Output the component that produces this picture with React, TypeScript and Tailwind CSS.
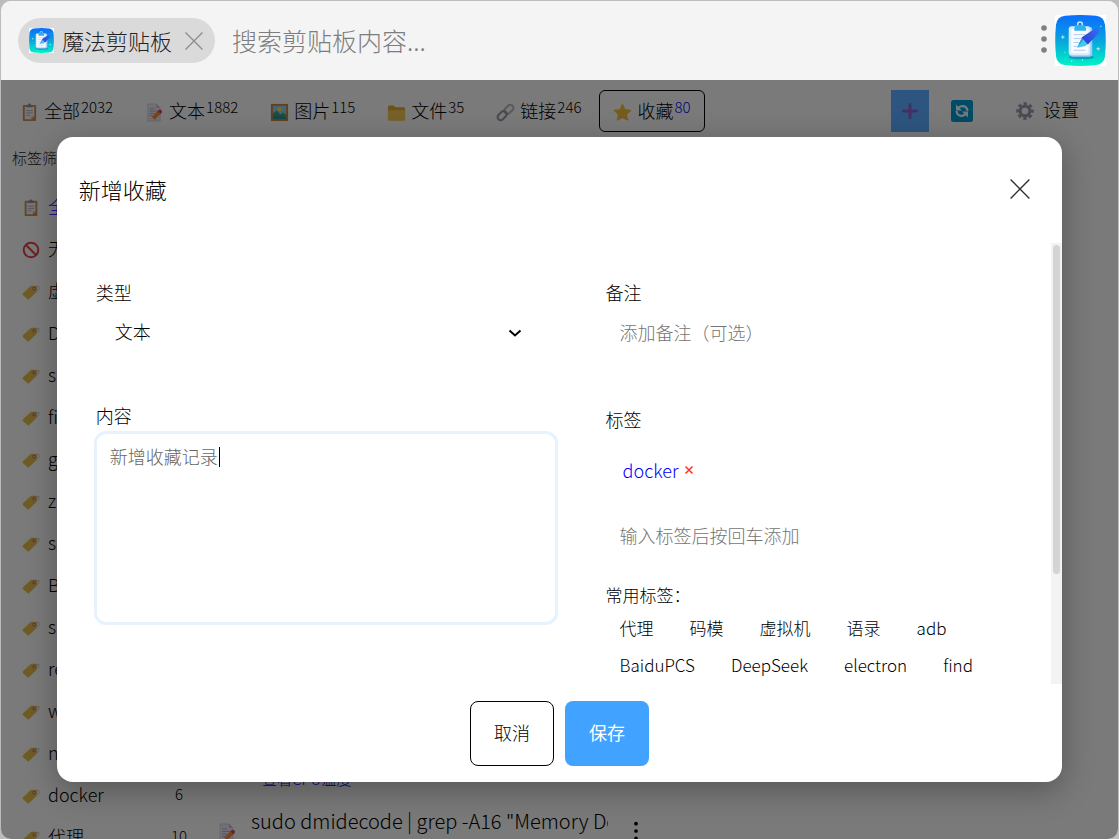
import { type ReactNode } from "react";

type IconProps = { className?: string };

function LogoIcon({ className }: IconProps) {
  return (
    <svg viewBox="0 0 52 52" className={className} aria-hidden="true">
      <defs>
        <linearGradient id="logo-bg" x1="0" y1="0" x2="0" y2="1">
          <stop offset="0" stopColor="#0a6cff" />
          <stop offset="0.5" stopColor="#08a4dc" />
          <stop offset="1" stopColor="#00f2c8" />
        </linearGradient>
        <linearGradient id="logo-pen" x1="1" y1="0" x2="0" y2="1">
          <stop offset="0" stopColor="#3a6cf5" />
          <stop offset="1" stopColor="#2340cf" />
        </linearGradient>
      </defs>
      <rect width="52" height="52" fill="#fff" />
      <path d="M10 .8Q26-.8 42 .8Q50 2 51 10Q52.6 26 51 42Q50 50 42 51Q26 52.8 10 51Q2 50 1 42Q-.6 26 1 10Q2 2 10 .8Z" fill="url(#logo-bg)" />
      <ellipse cx="27" cy="43" rx="13" ry="2.200" fill="#067fa8" opacity=".6" />
      <rect x="15" y="12" width="23" height="30.500" rx="3" fill="#9cc8fa" />
      <rect x="14" y="11.500" width="22" height="29.500" rx="3" fill="#d9eafd" />
      <rect x="16.500" y="14" width="17.500" height="25" rx="1" fill="#f8fbff" />
      <path d="M19 20h12M19 24h9M19 28h7M19 32h4M19 36h12" stroke="#b4cbee" strokeWidth="1" />
      <circle cx="25.500" cy="9.500" r="2.400" fill="none" stroke="#c8e9ff" strokeWidth="1.500" />
      <path d="M20.500 10.500h10l1.500 4.500q0 1-1 1H20.500q-1 0-1-1Z" fill="#2fb2ec" />
      <path d="M22.500 33.500l5-10 6.500 5.500-3 2.500Z" fill="#45c8f0" />
      <path d="M22.500 33.500l5-10 1.500 1.300Z" fill="#1f93dd" />
      <path d="M27 23L40.500 14q2.500-1 4 1.200q1 1.800-.4 3.600L33.500 30Z" fill="url(#logo-pen)" />
      <path d="M8 20l.6 1.900L10.500 22.500l-1.900.6L8 25l-.6-1.900L5.500 22.500l1.900-.6ZM44 32l.6 1.900L46.500 34.500l-1.900.6L44 37l-.6-1.900L41.500 34.500l1.900-.6Z" fill="#b5efff" />
      <path d="M17 46v2M28 45v1.500M46 11.500h1.500M9.500 38h1" stroke="#a0f0ea" strokeWidth="1" />
    </svg>
  );
}

function ClipboardIcon({ className }: IconProps) {
  return (
    <svg viewBox="0 0 18 20" className={className} aria-hidden="true">
      <rect x="2" y="2" width="14" height="17" rx="1" fill="#c98a4b" />
      <path d="M4 4h10v10l-3 3H4Z" fill="#eceaf0" />
      <path d="M14 14l-3 3v-3Z" fill="#b9b6c4" />
      <path d="M5.500 8h7M5.500 10.500h7M5.500 13h4" stroke="#a5a3ae" strokeWidth=".9" />
      <path d="M6 2h1.500a1.500 1.500 0 0 1 3 0H12v2.500H6Z" fill="#8b8994" />
    </svg>
  );
}

function MemoIcon({ className }: IconProps) {
  return (
    <svg viewBox="0 0 18 20" className={className} aria-hidden="true">
      <path d="M2 1h9l4 4v14H2Z" fill="#e4e1ee" stroke="#b9b5c6" strokeWidth=".6" />
      <path d="M11 1v4h4Z" fill="#b9b5c6" />
      <path d="M4 6h5M4 8.500h8M4 11h5M4 13.500h3" stroke="#a6a2b4" strokeWidth=".9" />
      <path d="M5 18.500l1.200-4 3 3Z" fill="#f7d9b0" />
      <path d="M6.200 14.500l6-6 3 3-6 6Z" fill="#f0873c" />
      <path d="M12.200 8.500l1.600-1.500q1.500-.6 2.600.6 1 1.300.3 2.500l-1.500 1.400Z" fill="#d8405a" />
    </svg>
  );
}

function PictureIcon({ className }: IconProps) {
  return (
    <svg viewBox="0 0 20 20" className={className} aria-hidden="true">
      <rect x="1" y="1" width="18" height="18" fill="#c4803e" />
      <rect x="3" y="3" width="14" height="14" fill="#8fc9ea" />
      <circle cx="10" cy="6.500" r="2" fill="#ffd23e" />
      <path d="M3 11l4-3 4 4 3-2 3 3v4H3Z" fill="#3f9d78" />
      <path d="M3 14q5-2 14 1v2H3Z" fill="#2c8a9a" />
    </svg>
  );
}

function FolderIcon({ className }: IconProps) {
  return (
    <svg viewBox="0 0 20 20" className={className} aria-hidden="true">
      <path d="M1 4q0-1.500 1.500-1.500h4.500l2 2h8.500Q19 4.500 19 6v11q0 1.500-1.500 1.500h-15Q1 18.500 1 17Z" fill="#d9a52c" />
      <path d="M1 7.500h18V17q0 1.500-1.500 1.500h-15Q1 18.500 1 17Z" fill="#ecc352" />
    </svg>
  );
}

function LinkIcon({ className }: IconProps) {
  return (
    <svg viewBox="0 0 20 20" fill="none" strokeWidth="2.200" className={className} aria-hidden="true">
      <rect x="8" y="3.500" width="11" height="6.500" rx="3.250" transform="rotate(-45 13.500 6.750)" stroke="#b4b2ba" />
      <rect x="1" y="10" width="11" height="6.500" rx="3.250" transform="rotate(-45 6.500 13.250)" stroke="#94929c" />
    </svg>
  );
}

function StarIcon({ className }: IconProps) {
  return (
    <svg viewBox="0 0 20 20" className={className} aria-hidden="true">
      <path d="M10 1.800l2.500 5.400 5.900.7-4.400 4 1.200 5.900L10 14.900l-5.200 2.900L6 11.900l-4.400-4 5.900-.7Z" fill="#ecb93c" stroke="#ecb93c" strokeWidth="1.600" strokeLinejoin="round" />
    </svg>
  );
}

function ForbiddenIcon({ className }: IconProps) {
  return (
    <svg viewBox="0 0 18 18" fill="none" stroke="#d9414b" strokeWidth="2" className={className} aria-hidden="true">
      <circle cx="9" cy="9" r="7.300" />
      <path d="M4 4l10 10" />
    </svg>
  );
}

function TagIcon({ className }: IconProps) {
  return (
    <svg viewBox="0 0 18 18" className={className} aria-hidden="true">
      <path d="M.8 10.600L8.600 3.200q.6-.5 1.400-.5h4q1 0 1 1v3.800q0 .8-.6 1.400L7 16.200q-.7.6-1.400 0L.8 12q-.6-.7 0-1.400Z" fill="#dfb94a" />
      <circle cx="12" cy="5.600" r="1.300" fill="#d8cfd0" stroke="#cc5a50" strokeWidth="1" />
      <path d="M12.500 5q2.500-2.600 4.300-1.400 1 1.800-1.300 4" fill="none" stroke="#b0aeb6" strokeWidth=".7" />
    </svg>
  );
}

function RefreshIcon({ className }: IconProps) {
  return (
    <svg viewBox="0 0 22 22" className={className} aria-hidden="true">
      <rect width="22" height="22" rx="2.500" fill="#0096cc" />
      <g fill="none" stroke="#eef4fa" strokeWidth="2.200">
        <path d="M16.500 11Q16 6.200 11.500 6.200q-2.400 0-4 1.800" />
        <path d="M5.500 11q.5 4.800 5 4.800 2.400 0 4-1.800" />
      </g>
      <path d="M5 4.500v6h6ZM17 17.500v-6h-6Z" fill="#eef4fa" />
    </svg>
  );
}

function GearIcon({ className }: IconProps) {
  return (
    <svg viewBox="0 0 18 18" fill="none" stroke="#9a94a6" className={className} aria-hidden="true">
      <circle cx="9" cy="9" r="4.900" strokeWidth="3.200" />
      <circle cx="9" cy="9" r="7.300" strokeWidth="3" strokeDasharray="3.200 2.533" strokeDashoffset="1.600" />
    </svg>
  );
}

function CrossIcon({ className }: IconProps) {
  return (
    <svg viewBox="0 0 20 20" fill="none" stroke="currentColor" strokeWidth="1.400" className={className} aria-hidden="true">
      <path d="M.6 .6l18.800 18.800M19.400 .6L.6 19.400" />
    </svg>
  );
}

function DotsIcon({ className }: IconProps) {
  return (
    <svg viewBox="0 0 6 28" fill="currentColor" className={className} aria-hidden="true">
      <circle cx="3" cy="3" r="2.800" />
      <circle cx="3" cy="14" r="2.800" />
      <circle cx="3" cy="25" r="2.800" />
    </svg>
  );
}

const tabs = [
  { label: "全部", count: 2032, icon: ClipboardIcon },
  { label: "文本", count: 1882, icon: MemoIcon },
  { label: "图片", count: 115, icon: PictureIcon },
  { label: "文件", count: 35, icon: FolderIcon },
  { label: "链接", count: 246, icon: LinkIcon },
  { label: "收藏", count: 80, icon: StarIcon, active: true },
];

const filters = [
  { label: "全部", icon: ClipboardIcon, active: true },
  { label: "无标签", icon: ForbiddenIcon },
  { label: "虚拟机", icon: TagIcon },
  { label: "DeepSeek", icon: TagIcon },
  { label: "shell", icon: TagIcon },
  { label: "find", icon: TagIcon },
  { label: "git", icon: TagIcon },
  { label: "zip", icon: TagIcon },
  { label: "sed", icon: TagIcon },
  { label: "BaiduPCS", icon: TagIcon },
  { label: "sudo", icon: TagIcon },
  { label: "redis", icon: TagIcon },
  { label: "web", icon: TagIcon },
  { label: "npm", icon: TagIcon },
  { label: "docker", icon: TagIcon, count: 6 },
  { label: "代理", icon: TagIcon, count: 10 },
];

const commonTags = ["代理", "码模", "虚拟机", "语录", "adb", "BaiduPCS", "DeepSeek", "electron", "find"];

function Header() {
  return (
    <header className="flex h-[79px] shrink-0 items-center bg-[#f4f4f4] pl-[17px] pr-3">
      <div className="flex h-[45px] items-center rounded-full bg-[#dadada] pl-[11px] pr-3">
        <LogoIcon className="size-[25px]" />
        <span className="ml-2 text-[22px] text-[#222]">魔法剪贴板</span>
        <button type="button" aria-label="关闭" className="ml-[13px] text-[#8c8c8c]">
          <CrossIcon className="size-[18px]" />
        </button>
      </div>
      <input
        type="text"
        aria-label="搜索"
        placeholder="搜索剪贴板内容..."
        className="ml-[17px] min-w-0 flex-1 bg-transparent text-[25px] outline-none placeholder:text-[#7d7d7d]"
      />
      <button type="button" aria-label="更多" className="mb-1 mr-2 text-[#808080]">
        <DotsIcon className="h-7 w-[6px]" />
      </button>
      <LogoIcon className="size-[51px]" />
    </header>
  );
}

function Toolbar() {
  return (
    <nav className="flex h-[62px] shrink-0 items-center pl-[5px] pr-[39px] text-lg text-black">
      <div className="flex gap-1">
        {tabs.map(({ label, count, icon: Icon, active }) => (
          <button
            key={label}
            type="button"
            className={`flex h-[42px] items-center rounded-md border px-[13px] ${active ? "border-black" : "border-transparent"}`}
          >
            <Icon className="mt-[2px] size-[19px]" />
            <span className="ml-[5px] pb-[2px]">{label}</span>
            <span className={`ml-px mb-2 text-[15px] ${active ? "text-[#00f]" : ""}`}>{count}</span>
          </button>
        ))}
      </div>
      <button type="button" aria-label="新增收藏" className="ml-auto flex h-[42px] w-[38px] items-center justify-center bg-[#5aabff]">
        <svg viewBox="0 0 16 16" className="size-4" aria-hidden="true">
          <path d="M8 1.500v13M1.500 8h13" stroke="#8a5fc8" strokeWidth="3" strokeLinecap="round" />
        </svg>
      </button>
      <button type="button" aria-label="刷新" className="ml-[22px]">
        <RefreshIcon className="size-[22px]" />
      </button>
      <button type="button" className="ml-[43px] flex items-center gap-[9px]">
        <GearIcon className="size-[18px]" />
        <span className="pb-1">设置</span>
      </button>
    </nav>
  );
}

function Sidebar() {
  return (
    <aside className="w-[200px] shrink-0 overflow-hidden">
      <h2 className="pl-[11px] text-[15px] leading-8 text-[#222]">标签筛选</h2>
      <ul className="pt-[13px] text-lg text-black">
        {filters.map(({ label, icon: Icon, active, count }) => (
          <li key={label} className="flex h-[42px] items-center pl-[21px] pr-3">
            <Icon className="size-[18px] shrink-0" />
            <span className={`ml-2 truncate pb-1 ${active ? "text-[#00f]" : ""}`}>{label}</span>
            {count && <span className="ml-auto w-5 pb-1 text-center text-[15px]">{count}</span>}
          </li>
        ))}
      </ul>
    </aside>
  );
}

function RecordList() {
  return (
    <section className="flex w-[440px] flex-col justify-end overflow-hidden pl-[17px]">
      <p className="pl-11 text-[15px] leading-5 text-[#00f]">查看CPU温度</p>
      <div className="mt-[14px] flex h-9 shrink-0 items-start">
        <MemoIcon className="mt-5 h-5 w-[18px] shrink-0" />
        <span className="ml-[15px] w-[357px] overflow-hidden whitespace-nowrap text-xl leading-9 text-black">
          sudo dmidecode | grep -A16 "Memory Device"
        </span>
        <DotsIcon className="ml-[26px] mt-[18px] h-5 w-1 shrink-0 text-black" />
      </div>
    </section>
  );
}

function FieldLabel({ htmlFor, children }: { htmlFor: string; children: ReactNode }) {
  return (
    <label htmlFor={htmlFor} className="block h-7 text-lg leading-7">
      {children}
    </label>
  );
}

function FavoriteDialog() {
  return (
    <div role="dialog" aria-label="新增收藏" className="flex h-[85%] w-[90%] flex-col overflow-hidden rounded-[16px] bg-white text-black shadow-[0_8px_32px_rgba(0,0,0,0.3)]">
      <div className="flex h-[106px] shrink-0 items-center justify-between pl-[22px] pr-8">
        <h1 className="text-[22px]">新增收藏</h1>
        <button type="button" aria-label="关闭" className="pb-[2px] text-[#333]">
          <CrossIcon className="size-5" />
        </button>
      </div>

      <form className="flex min-h-0 flex-1">
        <div className="grid flex-1 grid-cols-[51fr_49fr] gap-12 overflow-hidden pl-[37px] pt-[35px]">
          <div>
            <div className="pl-[2px]">
              <FieldLabel htmlFor="type">类型</FieldLabel>
            </div>
            <div className="relative">
              <select id="type" className="h-[50px] w-full appearance-none bg-transparent pl-[21px] text-lg outline-none">
                <option>文本</option>
              </select>
              <svg viewBox="0 0 14 14" className="pointer-events-none absolute right-9 top-5 size-[14px]" aria-hidden="true">
                <path d="M1.500 4.500L7 9.500l5.500-5" fill="none" stroke="#000" strokeWidth="2" />
              </svg>
            </div>
            <div className="mt-[45px] pl-[2px]">
              <FieldLabel htmlFor="content">内容</FieldLabel>
            </div>
            <div className="relative mt-[2px]">
              <textarea
                id="content"
                placeholder="新增收藏记录"
                className="block h-[194px] w-full resize-none rounded-xl border-3 border-[#e6f3ff] px-[13px] py-[10px] text-lg leading-6 outline-none placeholder:text-[#666]"
              />
              {/* text caret */}
              <span className="absolute left-[125px] top-4 h-5 w-px bg-black" />
            </div>
          </div>

          <div>
            <FieldLabel htmlFor="note">备注</FieldLabel>
            <input id="note" type="text" placeholder="添加备注（可选）" className="block h-13 w-full pl-[14px] text-lg outline-none placeholder:text-[#757575]" />
            <div className="mt-[47px]">
              <FieldLabel htmlFor="tag">标签</FieldLabel>
            </div>
            <div className="flex h-[74px] items-center gap-[6px] pl-[17px] text-lg">
              <span className="text-[#00f]">docker</span>
              <button type="button" aria-label="删除 docker" className="text-[#f33]">
                <svg viewBox="0 0 10 10" className="size-[10px]" aria-hidden="true">
                  <path d="M1.500 1.500l7 7M8.500 1.500l-7 7" stroke="currentColor" strokeWidth="1.600" />
                </svg>
              </button>
            </div>
            <input id="tag" type="text" placeholder="输入标签后按回车添加" className="mt-[2px] block h-13 w-full pl-[14px] text-lg outline-none placeholder:text-[#757575]" />
            <p className="mt-5 text-[17px] leading-7">常用标签：</p>
            <div className="mt-[2px] flex flex-wrap gap-x-2 gap-y-1">
              {commonTags.map((tag) => (
                <button key={tag} type="button" className="h-[33px] px-[14px] text-[17px]">
                  {tag}
                </button>
              ))}
            </div>
          </div>
        </div>

        {/* scroll bar */}
        <div className="flex w-[11px] shrink-0 justify-center bg-[#f3f3f3] pt-[2px]">
          <div className="h-3/4 w-[7px] rounded-full bg-[#d4d4d4]" />
        </div>
      </form>

      <div className="flex h-[98px] shrink-0 items-start justify-center gap-[11px] pt-[17px] text-lg">
        <button type="button" className="h-[65px] w-[84px] rounded-lg border border-black pb-1">
          取消
        </button>
        <button type="button" className="h-[65px] w-[84px] rounded-lg bg-[#42a2ff] pb-1 font-normal text-white">
          保存
        </button>
      </div>
    </div>
  );
}

export default function App() {
  return (
    <div className="h-screen bg-[#bcbcbc] px-px pt-px font-['Noto_Sans_CJK_SC',sans-serif] font-light">
      <div className="flex h-full flex-col overflow-hidden rounded-[10px] bg-[#f4f4f4]">
        <Header />
        <main className="relative flex min-h-0 flex-1 flex-col">
          <Toolbar />
          <div className="flex min-h-0 flex-1">
            <Sidebar />
            <RecordList />
          </div>
          <div className="absolute inset-0 flex items-center justify-center bg-black/50">
            <FavoriteDialog />
          </div>
        </main>
      </div>
    </div>
  );
}
